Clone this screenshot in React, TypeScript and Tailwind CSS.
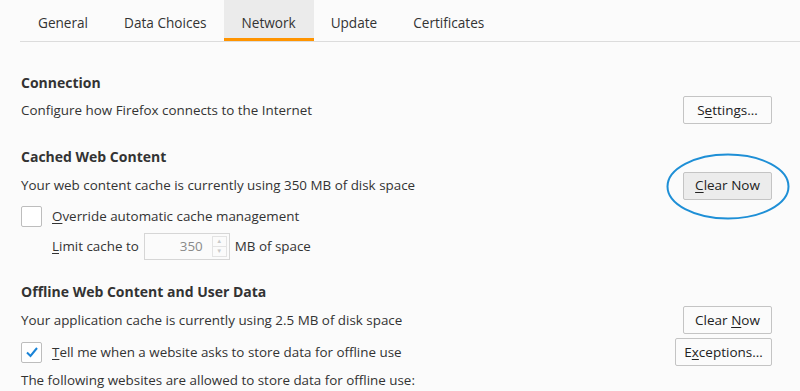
import React from "react";

const FONT = { fontFamily: '"Open Sans", "Noto Sans", sans-serif' };

function Key({ children }: { children: React.ReactNode }) {
  return <span className="underline underline-offset-2">{children}</span>;
}

function Button({
  children,
  active,
  className = "",
}: {
  children: React.ReactNode;
  active?: boolean;
  className?: string;
}) {
  return (
    <button
      className={`flex h-[28px] items-center justify-center whitespace-nowrap rounded-[2px] border border-[#c4c4c4] text-[13.5px] text-[#222] ${
        active ? "bg-[#ececec]" : "bg-[#fbfbfb]"
      } ${className}`}
    >
      {children}
    </button>
  );
}

function Checkbox({ checked }: { checked?: boolean }) {
  return (
    <span className="flex h-[21px] w-[21px] items-center justify-center rounded-[2px] border border-[#bdbdbd] bg-white">
      {checked && (
        <svg width="14" height="12" viewBox="0 0 14 12">
          <path d="M2 6.5 L5.5 10 L12 2" fill="none" stroke="#1a84d8" strokeWidth="2" />
        </svg>
      )}
    </span>
  );
}

const tabs = ["General", "Data Choices", "Network", "Update", "Certificates"];

export default function App() {
  return (
    <div className="h-[391px] w-[800px] overflow-hidden bg-[#fbfbfb] text-[13.4px] text-[#333]" style={FONT}>
      {/* tab strip */}
      <div className="ml-[20px] flex h-[42px] border-b border-[#dcdcdc]">
        {tabs.map((t) => (
          <div
            key={t}
            className={`flex h-[41px] items-center px-[18px] pt-[8px] text-[13.6px] ${
              t === "Network" ? "-ml-[1px] mr-[-1px] border-b-[3px] border-[#ff9400] bg-[#ebebeb]" : "border-b-[3px] border-transparent"
            }`}
          >
            {t}
          </div>
        ))}
      </div>

      <div className="pl-[21px] pr-[28px]">
        <div className="mt-[26px] flex h-[28px] items-center text-[14px] font-bold">Connection</div>
        <div className="flex h-[28px] items-center justify-between">
          <span>Configure how Firefox connects to the Internet</span>
          <Button className="w-[89px]">
            S<Key>e</Key>ttings…
          </Button>
        </div>

        <div className="mt-[18px] flex h-[28px] items-center text-[14px] font-bold">Cached Web Content</div>
        <div className="mt-[1px] flex h-[29px] items-center justify-between">
          <span>Your web content cache is currently using 350 MB of disk space</span>
          <div className="relative">
            <Button active className="w-[89px]">
              <Key>C</Key>lear Now
            </Button>
            <svg className="pointer-events-none absolute left-[-17px] top-[-19px]" width="124" height="67" viewBox="0 0 124 67">
              <ellipse cx="62" cy="33.5" rx="60.5" ry="32" fill="none" stroke="#1e8fd6" strokeWidth="2" />
            </svg>
          </div>
        </div>
        <div className="mt-[1px] flex h-[30px] items-center gap-[10px]">
          <Checkbox />
          <span>
            <Key>O</Key>verride automatic cache management
          </span>
        </div>
        <div className="flex h-[30px] items-center pl-[31px]">
          <span>
            <Key>L</Key>imit cache to
          </span>
          <div className="ml-[5px] flex h-[27px] w-[86px] items-stretch border border-[#d6d6d6] bg-[#fbfbfb]">
            <span className="flex flex-1 items-center justify-end pr-[9px] text-[#8a8a8a]">350</span>
            <span className="my-[2px] mr-[2px] flex w-[15px] flex-col border border-[#e3e3e3]">
              <span className="flex flex-1 items-center justify-center border-b border-[#e3e3e3] text-[6px] leading-none text-[#c8c8c8]">▲</span>
              <span className="flex flex-1 items-center justify-center text-[6px] leading-none text-[#c8c8c8]">▼</span>
            </span>
          </div>
          <span className="ml-[5px]">MB of space</span>
        </div>

        <div className="mt-[16px] flex h-[28px] items-center text-[14px] font-bold">Offline Web Content and User Data</div>
        <div className="mt-[1px] flex h-[28px] items-center justify-between">
          <span>Your application cache is currently using 2.5 MB of disk space</span>
          <Button className="w-[89px]">
            Clear&nbsp;<Key>N</Key>ow
          </Button>
        </div>
        <div className="mt-[4px] flex h-[28px] items-center justify-between">
          <div className="flex items-center gap-[10px]">
            <Checkbox checked />
            <span>
              <Key>T</Key>ell me when a website asks to store data for offline use
            </span>
          </div>
          <Button className="w-[97px]">
            E<Key>x</Key>ceptions…
          </Button>
        </div>
        <div className="flex h-[28px] items-center">The following websites are allowed to store data for offline use:</div>
      </div>
    </div>
  );
}
